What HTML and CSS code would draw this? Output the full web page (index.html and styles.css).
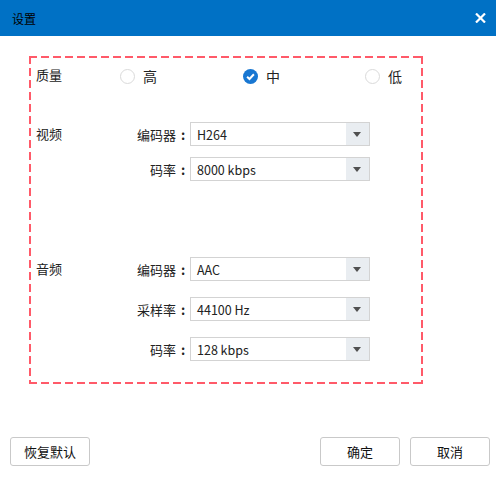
FILE: index.html
```html
<!DOCTYPE html>
<html lang="zh-CN">

<head>
    <meta charset="UTF-8">
    <meta name="viewport" content="width=device-width, initial-scale=1.0">
    <title>设置</title>
    <link rel="stylesheet" href="styles.css">
</head>

<body>
    <div class="titlebar">
        <span class="title">设置</span>
        <svg class="close" width="11" height="10" viewBox="0 0 11 10">
            <path d="M1 0.5 L10 9.5 M10 0.5 L1 9.5" stroke="#fff" stroke-width="2.2" fill="none" />
        </svg>
    </div>

    <div class="panel">
        <!-- 质量 -->
        <div class="quality">
            <span class="group-title">质量</span>
            <label class="radio"><span class="dot"></span>高</label>
            <label class="radio checked">
                <svg class="dot-checked" width="15" height="15" viewBox="0 0 15 15">
                    <circle cx="7.5" cy="7.5" r="7.5" fill="#1877d2" />
                    <path d="M4.1 7.7 L6.5 10 L10.9 5.3" stroke="#fff" stroke-width="2" fill="none" />
                </svg>中
            </label>
            <label class="radio"><span class="dot"></span>低</label>
        </div>

        <!-- 视频 -->
        <div class="group video">
            <div class="group-title">视频</div>
            <div class="fields">
                <div class="field">
                    <span class="field-label">编码器<span class="colon">:</span></span>
                    <div class="select"><span class="value">H264</span><span class="arrow"></span></div>
                </div>
                <div class="field">
                    <span class="field-label">码率<span class="colon">:</span></span>
                    <div class="select"><span class="value">8000 kbps</span><span class="arrow"></span></div>
                </div>
            </div>
        </div>

        <!-- 音频 -->
        <div class="group audio">
            <div class="group-title">音频</div>
            <div class="fields">
                <div class="field">
                    <span class="field-label">编码器<span class="colon">:</span></span>
                    <div class="select"><span class="value">AAC</span><span class="arrow"></span></div>
                </div>
                <div class="field">
                    <span class="field-label">采样率<span class="colon">:</span></span>
                    <div class="select"><span class="value">44100 Hz</span><span class="arrow"></span></div>
                </div>
                <div class="field">
                    <span class="field-label">码率<span class="colon">:</span></span>
                    <div class="select"><span class="value">128 kbps</span><span class="arrow"></span></div>
                </div>
            </div>
        </div>
    </div>

    <div class="footer">
        <button class="btn">恢复默认</button>
        <div class="footer-right">
            <button class="btn">确定</button>
            <button class="btn">取消</button>
        </div>
    </div>
</body>

</html>
```

FILE: styles.css
```css
body {
    margin: 0;
    width: 496px;
    height: 484px;
    background-color: #fff;
    font-family: "Noto Sans CJK SC", "Noto Sans", sans-serif;
    font-size: 13px;
    color: #222;
}

.titlebar {
    height: 36px;
    background-color: #0071c5;
    display: flex;
    align-items: center;
    justify-content: space-between;
    padding: 0 10px 0 12px;
}

.title {
    font-size: 12px;
    color: #000;
}

.close {
    display: block;
}

/* 红色虚线框 */
.panel {
    box-sizing: border-box;
    width: 394px;
    height: 328px;
    margin: 20px 0 0 29px;
    padding: 2px 2px 0 7px;
    background:
        linear-gradient(90deg, #ff5a69 8px, transparent 8px) left top / 12px 2px repeat-x,
        linear-gradient(90deg, #ff5a69 8px, transparent 8px) left bottom / 12px 2px repeat-x,
        linear-gradient(180deg, #ff5a69 8px, transparent 8px) left top / 2px 12px repeat-y,
        linear-gradient(180deg, #ff5a69 8px, transparent 8px) right top / 2px 12px repeat-y;
}

.quality {
    height: 34px;
    display: grid;
    grid-template-columns: 84px 123px 122px auto;
    align-items: center;
}

.radio {
    display: flex;
    align-items: center;
    gap: 8px;
    font-size: 14px;
    padding-top: 2px;
}

.dot {
    box-sizing: border-box;
    width: 15px;
    height: 15px;
    border: 1px solid #dadada;
    border-radius: 50%;
    background-color: #fff;
}

.dot-checked {
    display: block;
}

.group {
    display: flex;
    align-items: flex-start;
}

.video {
    margin-top: 30px;
}

.audio {
    margin-top: 76px;
}

.group-title {
    width: 64px;
    line-height: 24px;
}

.fields {
    display: flex;
    flex-direction: column;
}

.video .fields {
    gap: 11px;
}

.audio .fields {
    gap: 16px;
}

.field {
    display: flex;
    align-items: center;
}

.field-label {
    width: 90px;
    text-align: right;
}

/* 冒号居中显示 */
.colon {
    display: inline-block;
    width: 14px;
    text-align: center;
    font-weight: bold;
}

.select {
    box-sizing: border-box;
    width: 180px;
    height: 24px;
    border: 1px solid #d3d3d3;
    display: flex;
    align-items: center;
    justify-content: space-between;
}

.value {
    padding-left: 6px;
    font-size: 12.5px;
    color: #222;
}

.arrow {
    width: 23px;
    height: 22px;
    background-color: #e9edf1;
    position: relative;
}

.arrow::after {
    content: "";
    position: absolute;
    left: 7px;
    top: 9px;
    border-left: 4.5px solid transparent;
    border-right: 4.5px solid transparent;
    border-top: 5px solid #505050;
}

.footer {
    display: flex;
    padding: 0 6px 0 10px;
    margin-top: 53px;
}

.footer-right {
    margin-left: auto;
    display: flex;
    gap: 10px;
}

.btn {
    width: 80px;
    height: 29px;
    border: 1px solid #c9c9c9;
    border-radius: 3px;
    background-color: #fff;
    font-family: "Noto Sans CJK SC", sans-serif;
    font-size: 13px;
    color: #111;
    padding: 0;
}
```
